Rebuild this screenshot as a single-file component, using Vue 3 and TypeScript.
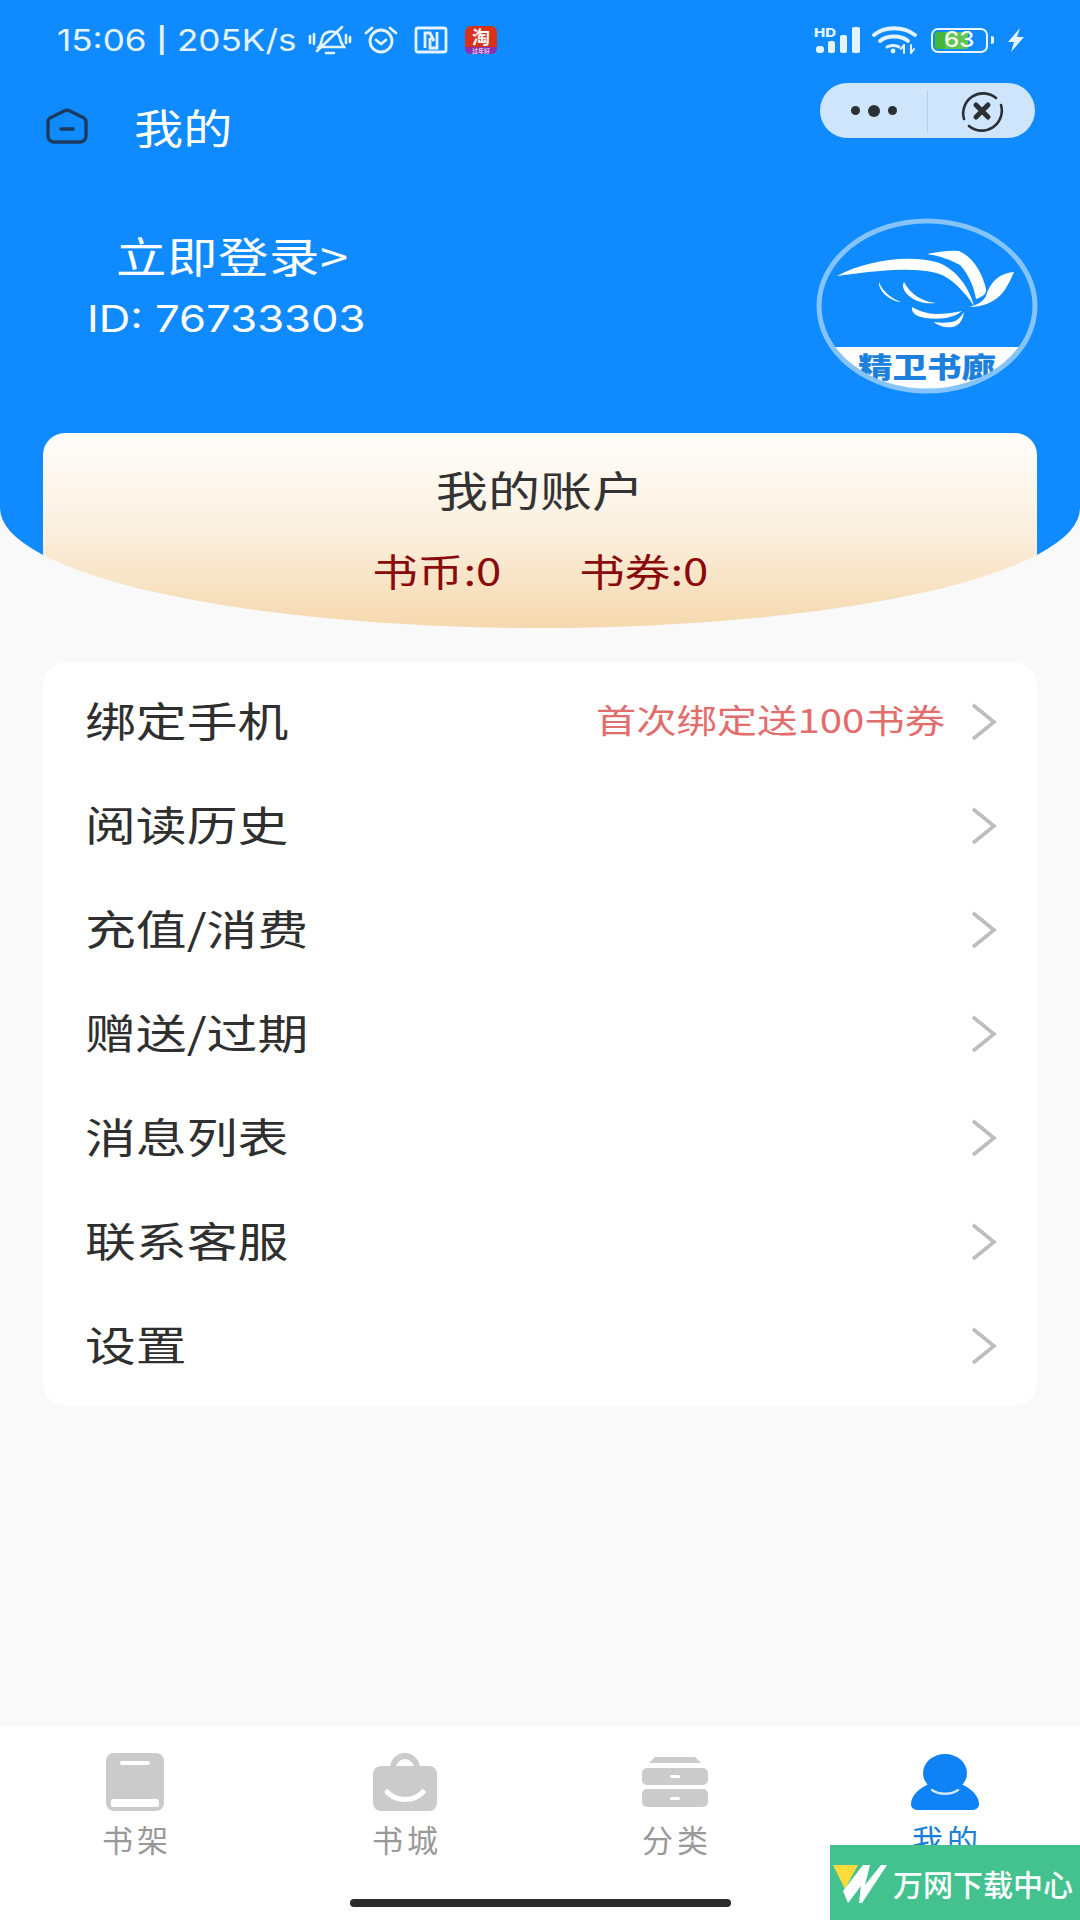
<template>
  <div class="page">
    <header class="hero">
      <!-- status bar -->
      <div class="status-bar">
        <span class="status-text">15:06 <b class="pipe">|</b> 205K/s</span>
        <svg class="st-icon mute" width="44" height="30" viewBox="0 0 44 30" fill="none" stroke="#e4f3ff" stroke-width="2.6" stroke-linecap="round">
          <path d="M11 22c3-3 2-7 4-11 2-4 9-6 14-3 3 2 3 6 4 9l3 5z" />
          <path d="M9 26 34 2" />
          <path d="M18 28h8" />
          <path d="M2 11v7M6 9v10M38 10v8M42 12v5" />
        </svg>
        <svg class="st-icon" width="36" height="30" viewBox="0 0 36 30" fill="none" stroke="#e4f3ff" stroke-width="2.8" stroke-linecap="round" stroke-linejoin="round">
          <circle cx="18" cy="16" r="11" />
          <path d="M13 15l5 4 5-4" />
          <path d="M3 8l6-5M33 8l-6-5" />
        </svg>
        <svg class="st-icon" width="34" height="28" viewBox="0 0 34 28" fill="none" stroke="#e4f3ff" stroke-width="2.8">
          <rect x="2" y="2" width="30" height="24" rx="2" />
          <path d="M11 22V7h5l4 8M16 12v10h7V6" />
        </svg>
        <div class="taobao">
          <span class="taobao-main">淘</span>
          <span class="taobao-sub">过年好</span>
        </div>
        <div class="status-right">
          <svg width="47" height="28" viewBox="0 0 47 28" fill="#e4f3ff">
            <text x="0" y="11" font-size="12" font-weight="800" font-family="Inter, sans-serif" textLength="22" lengthAdjust="spacingAndGlyphs">HD</text>
            <rect x="2" y="20" width="8" height="7" rx="3" />
            <rect x="14" y="15" width="7" height="12" rx="2" />
            <rect x="26" y="9" width="7" height="18" rx="2" />
            <rect x="38" y="1" width="8" height="26" rx="2" />
          </svg>
          <svg width="45" height="28" viewBox="0 0 45 28" fill="none" stroke="#e4f3ff" stroke-width="3.8" stroke-linecap="round">
            <path d="M2 9c11-9 29-9 41 0" />
            <path d="M8 15c7-6 21-6 28 0" />
            <path d="M15 21c3-2 9-2 12 0" stroke-width="3" />
            <circle cx="21" cy="25" r="1.4" fill="#e4f3ff" stroke-width="2" />
            <path d="M32 19v8M29 23l3-4M39 27v-8M42 23l-3 4" stroke-width="2" />
          </svg>
          <div class="battery">
            <div class="battery-body">
              <div class="battery-fill"></div>
              <span class="battery-num">63</span>
            </div>
            <div class="battery-nub"></div>
          </div>
          <svg class="bolt" width="18" height="24" viewBox="0 0 18 24" fill="#e4f3ff">
            <path d="M13 0 1 14h6l-3 10 13-15h-7z" />
          </svg>
        </div>
      </div>

      <!-- nav bar -->
      <div class="nav-bar">
        <svg class="home-icon" width="42" height="36" viewBox="0 0 42 36" fill="none" stroke="#1c3a5e" stroke-width="3.4" stroke-linecap="round" stroke-linejoin="round">
          <path d="M2 13c0-1 1-2 2-3l14-7c2-1 4-1 6 0l14 7c1 1 2 2 2 3v15a6 6 0 0 1-6 6H8a6 6 0 0 1-6-6z" />
          <path d="M15 21h12" />
        </svg>
        <span class="nav-title wide">我的</span>
        <div class="capsule">
          <div class="capsule-dots">
            <i></i><i class="big"></i><i></i>
          </div>
          <div class="capsule-close">
            <svg width="44" height="44" viewBox="0 0 44 44" fill="none" stroke="#2b3036" stroke-linecap="round">
              <path d="M36 9A20 20 0 0 0 4 30" stroke-width="2.6" />
              <path d="M9 37A20 20 0 0 0 41 16" stroke-width="2.6" />
              <path d="M16 16l12 12M28 16 16 28" stroke-width="5" />
            </svg>
          </div>
        </div>
      </div>

      <!-- profile -->
      <div class="profile">
        <div class="profile-text">
          <div class="login"><span class="wide">立即登录&gt;</span></div>
          <div class="user-id wide">ID: 76733303</div>
        </div>
        <svg class="logo" width="222" height="178" viewBox="0 0 222 178">
          <defs>
            <clipPath id="logoClip">
              <ellipse cx="111" cy="89" rx="108" ry="85" />
            </clipPath>
          </defs>
          <g clip-path="url(#logoClip)">
            <rect x="0" y="130" width="222" height="48" fill="#fff" />
            <text x="42" y="161" class="logo-text" textLength="138" lengthAdjust="spacingAndGlyphs">精卫书廊</text>
          </g>
          <ellipse cx="111" cy="89" rx="108" ry="85" fill="none" stroke="#85c4fb" stroke-width="5" />
          <g fill="#fff">
            <path d="M21 59C48 44 90 37 120 45c18 5 33 24 38 44-6-9-14-19-25-27-14-10-40-13-112-3z" />
            <path d="M111 37c11-2 22-4 32-3 14 6 23 21 27 38 1 5-4 8-10 10-2-12-7-24-16-34-9-5-20-9-33-11z" />
            <path d="M198 55c-10 1-22 5-28 24-3 6-9 9-17 11 13 0 26-4 35-16 4-6 7-12 10-19z" />
            <path d="M63 65c-1 8 10 19 22 20-8-3-18-9-22-20z" />
            <path d="M88 65c-5 8 10 24 32 21-13-1-26-9-32-21z" />
            <path d="M96 90c-1 7 6 10 14 11 14 2 28 0 36-7-8 2-18 3-26 3-8 0-17-3-24-7z" />
            <path d="M118 105c4 4 12 6 18 5 7-1 11-7 12-15-3 5-7 9-12 10-6 1-12 1-18 0z" />
          </g>
        </svg>
      </div>

      <!-- account card, cut off by the curved bottom of the hero -->
      <section class="account">
        <div class="account-title">我的账户</div>
        <div class="account-stats">
          <span>书币:0</span>
          <span>书券:0</span>
        </div>
      </section>
    </header>

    <section class="menu">
      <div v-for="item in menuItems" :key="item.label" class="menu-row">
        <span class="menu-label">{{ item.label }}</span>
        <span v-if="item.hint" class="menu-hint">{{ item.hint }}</span>
        <svg class="chevron" width="26" height="38" viewBox="0 0 26 38" fill="none" stroke="#bdbdbd" stroke-width="3.6">
          <path d="M2 2l21 17L2 36" />
        </svg>
      </div>
    </section>

    <nav class="tabbar">
      <div v-for="tab in tabs" :key="tab.label" class="tab" :class="{ active: tab.active }">
        <div class="tab-icon">
          <svg v-if="tab.icon === 'shelf'" width="58" height="58" viewBox="0 0 58 58">
            <rect x="0" y="0" width="58" height="58" rx="8" fill="#cbcbcb" />
            <rect x="14" y="8" width="30" height="4" rx="2" fill="#fff" />
            <rect x="5" y="46" width="48" height="8" rx="2" fill="#fff" />
          </svg>
          <svg v-else-if="tab.icon === 'store'" width="64" height="58" viewBox="0 0 64 58">
            <path d="M20 15a12 12 0 0 1 24 0" fill="none" stroke="#cbcbcb" stroke-width="6" />
            <rect x="0" y="13" width="64" height="45" rx="8" fill="#cbcbcb" />
            <path d="M14 39c9 10 27 10 36 0" fill="none" stroke="#fff" stroke-width="5" stroke-linecap="round" />
          </svg>
          <svg v-else-if="tab.icon === 'category'" width="66" height="52" viewBox="0 0 66 52">
            <path d="M7 7 13 1h40l6 6z" fill="#cbcbcb" />
            <rect x="0" y="12" width="66" height="17" rx="5" fill="#cbcbcb" />
            <rect x="0" y="33" width="66" height="18" rx="5" fill="#cbcbcb" />
            <rect x="28" y="19" width="10" height="3" rx="1.5" fill="#fff" />
            <rect x="28" y="41" width="10" height="3" rx="1.5" fill="#fff" />
          </svg>
          <svg v-else width="68" height="56" viewBox="0 0 68 56">
            <ellipse cx="34" cy="19" rx="22" ry="19" fill="#0f82f5" />
            <path d="M18 30C8 34 0 42 0 50c0 4 3 6 8 6h52c5 0 8-2 8-6 0-8-8-16-18-20-4 4-10 6-16 6s-12-2-16-6z" fill="#0f82f5" />
            <path d="M21 36c7 5 19 5 26 0" fill="none" stroke="#cfe6fd" stroke-width="2.4" stroke-linecap="round" />
          </svg>
        </div>
        <span class="tab-label">{{ tab.label }}</span>
      </div>
      <div class="home-bar"></div>
    </nav>

    <!-- watermark over the bottom right corner -->
    <div class="watermark">
      <svg width="58" height="44" viewBox="0 0 58 44">
        <path d="M3 4h25L15 28z" fill="#fbdc3c" />
        <path d="M18 42 13 30 33 4h7L35 24 51 4h6L32 42h-3l2-17z" fill="#fff" />
      </svg>
      <span class="watermark-text">万网下载中心</span>
    </div>
  </div>
</template>

<script setup lang="ts">
interface MenuItem {
  label: string
  hint?: string
}

interface Tab {
  label: string
  icon: 'shelf' | 'store' | 'category' | 'mine'
  active?: boolean
}

const menuItems: MenuItem[] = [
  { label: '绑定手机', hint: '首次绑定送100书券' },
  { label: '阅读历史' },
  { label: '充值/消费' },
  { label: '赠送/过期' },
  { label: '消息列表' },
  { label: '联系客服' },
  { label: '设置' },
]

const tabs: Tab[] = [
  { label: '书架', icon: 'shelf' },
  { label: '书城', icon: 'store' },
  { label: '分类', icon: 'category' },
  { label: '我的', icon: 'mine', active: true },
]
</script>

<style>
html,
body {
  margin: 0;
  background: #f9f9fa;
}
</style>

<style scoped>
.page {
  position: relative;
  width: 1080px;
  height: 1920px;
  display: flex;
  flex-direction: column;
  overflow: hidden;
  background: #f9f9fa;
  font-family: "Noto Sans CJK SC", "Noto Sans", sans-serif;
  color: #2f2f2f;
}

/* 原图文字整体偏宽 */
.wide {
  display: inline-block;
  transform: scaleX(1.2);
  transform-origin: left center;
  white-space: nowrap;
}

/* 头部: the blue stays out from under the card so the curve has no blue fringe */
.hero {
  height: 628px;
  flex-shrink: 0;
  background:
    linear-gradient(#0f8bff, #0f8bff) 0 0 / 100% 460px no-repeat,
    linear-gradient(#0f8bff, #0f8bff) 0 0 / 43px 100% no-repeat,
    linear-gradient(#0f8bff, #0f8bff) 100% 0 / 43px 100% no-repeat;
  clip-path: inset(0 round 0 0 540px 540px / 0 0 120px 120px);
  display: flex;
  flex-direction: column;
}

.status-bar {
  height: 80px;
  padding: 0 55px 0 57px;
  display: flex;
  align-items: center;
  color: #e4f3ff;
}

.status-text {
  font-family: Inter, "Open Sans", sans-serif;
  font-size: 30px;
  width: 251px;
  white-space: nowrap;
  transform: scaleX(1.17);
  transform-origin: left center;
}

.pipe {
  font-weight: 600;
  font-size: 25px;
  position: relative;
  top: -2px;
}

.st-icon {
  margin-right: 15px;
}

.st-icon.mute {
  margin-right: 11px;
}

.taobao {
  width: 32px;
  height: 28px;
  margin-left: 2px;
  border-radius: 6px;
  background: #d8321c;
  color: #fff;
  display: flex;
  flex-direction: column;
  align-items: center;
}

.taobao-main {
  font-size: 18px;
  line-height: 21px;
  font-weight: 700;
}

.taobao-sub {
  width: 100%;
  height: 7px;
  font-size: 6px;
  line-height: 7px;
  text-align: center;
  background: #8a2fb0;
  border-radius: 0 0 6px 6px;
}

.status-right {
  margin-left: auto;
  display: flex;
  align-items: center;
  gap: 11px;
}

.battery {
  display: flex;
  align-items: center;
  gap: 3px;
  margin-left: 3px;
}

.bolt {
  margin-left: 2px;
}

.battery-body {
  position: relative;
  width: 57px;
  height: 25px;
  box-sizing: border-box;
  border: 2.5px solid #e4f3ff;
  border-radius: 7px;
  overflow: hidden;
  display: flex;
  align-items: center;
  justify-content: center;
}

.battery-fill {
  position: absolute;
  left: 2px;
  top: 2px;
  bottom: 2px;
  width: 33px;
  border-radius: 2px;
  background: linear-gradient(90deg, #45b636 0 30%, #62c455 30% 100%);
}

.battery-num {
  position: relative;
  font-family: Inter, sans-serif;
  font-size: 21px;
  line-height: 20px;
  font-weight: 500;
  color: #f4fff0;
  transform: scaleX(1.15);
}

.battery-nub {
  width: 3px;
  height: 8px;
  border-radius: 0 2px 2px 0;
  background: #e4f3ff;
}

.nav-bar {
  height: 100px;
  padding: 0 45px 8px 46px;
  box-sizing: border-box;
  display: flex;
  align-items: center;
}

.home-icon {
  margin-right: 46px;
}

.nav-title {
  font-size: 41px;
  color: #fff;
}

.capsule {
  margin-left: auto;
  align-self: flex-start;
  margin-top: 3px;
  width: 215px;
  height: 55px;
  border-radius: 28px;
  background: #cfe5fb;
  display: flex;
  align-items: center;
}

.capsule-dots {
  width: 107px;
  height: 42px;
  border-right: 1px solid #b6cde3;
  display: flex;
  align-items: center;
  justify-content: center;
  gap: 8px;
}

.capsule-dots i {
  width: 9px;
  height: 9px;
  border-radius: 50%;
  background: #2b3036;
}

.capsule-dots i.big {
  width: 12px;
  height: 12px;
}

.capsule-close {
  flex: 1;
  display: flex;
  align-items: center;
  justify-content: center;
}

.profile {
  height: 253px;
  padding: 0 42px 0 87px;
  display: flex;
  justify-content: space-between;
}

.profile-text {
  padding-top: 47px;
  color: #fff;
}

.login {
  padding-left: 29px;
  font-size: 42px;
  line-height: 56px;
  letter-spacing: 0.5px;
}

.user-id {
  margin-top: 8px;
  font-family: Inter, "Open Sans", sans-serif;
  font-size: 37px;
  line-height: 56px;
  transform: scaleX(1.18);
}

.logo {
  margin-top: 37px;
}

.logo-text {
  font-family: "Noto Sans CJK SC", sans-serif;
  font-size: 28px;
  font-weight: 900;
  fill: #1d80dc;
}

.account {
  flex: 1;
  margin: 0 43px;
  border-radius: 22px 22px 0 0;
  background: linear-gradient(180deg, #fffefc 0%, #fbf0df 50%, #f5d8ae 100%);
  text-align: center;
}

.account-title {
  margin-top: 26px;
  font-size: 42px;
  line-height: 60px;
  color: #333;
  transform: scaleX(1.24);
}

.account-stats {
  margin-top: 25px;
  display: flex;
  justify-content: center;
  gap: 99px;
  font-size: 38px;
  line-height: 52px;
  color: #8a0a0a;
}

.account-stats span {
  transform: scaleX(1.2);
}

.menu {
  margin: 34px 43px 0;
  padding: 8px 0;
  background: #fff;
  border-radius: 24px;
}

.menu-row {
  height: 104px;
  padding: 0 40px 6px 42px;
  box-sizing: border-box;
  display: flex;
  align-items: center;
}

.menu-label {
  font-size: 41px;
  white-space: nowrap;
  transform: scaleX(1.24);
  transform-origin: left center;
}

.menu-hint {
  margin-left: auto;
  font-size: 33px;
  color: #e26d6d;
  white-space: nowrap;
  transform: scaleX(1.22);
  transform-origin: right center;
}

.chevron {
  margin-left: auto;
  position: relative;
  top: 3px;
}

.menu-hint + .chevron {
  margin-left: 26px;
}

/* 底部 tab */
.tabbar {
  position: relative;
  margin-top: auto;
  height: 193px;
  background: #fff;
  display: grid;
  grid-template-columns: repeat(4, 1fr);
  align-items: start;
}

.tab {
  display: flex;
  flex-direction: column;
  align-items: center;
  color: #999;
}

.tab.active {
  color: #1a7fd8;
}

.tab-icon {
  height: 60px;
  margin-top: 25px;
  display: flex;
  align-items: center;
  justify-content: center;
}

.tab-label {
  margin-top: 7px;
  font-size: 31px;
  line-height: 40px;
  letter-spacing: 4px;
  padding-left: 4px;
}

.home-bar {
  position: absolute;
  left: 350px;
  bottom: 13px;
  width: 381px;
  height: 8px;
  border-radius: 4px;
  background: #2b2b2b;
}

.watermark {
  position: absolute;
  right: 0;
  bottom: 0;
  width: 250px;
  height: 75px;
  background: #43c290;
  display: flex;
  align-items: center;
  color: #fff;
}

.watermark svg {
  margin: 0 5px 0 0;
  flex-shrink: 0;
}

.watermark-text {
  font-size: 30px;
  font-weight: 500;
  white-space: nowrap;
}
</style>
